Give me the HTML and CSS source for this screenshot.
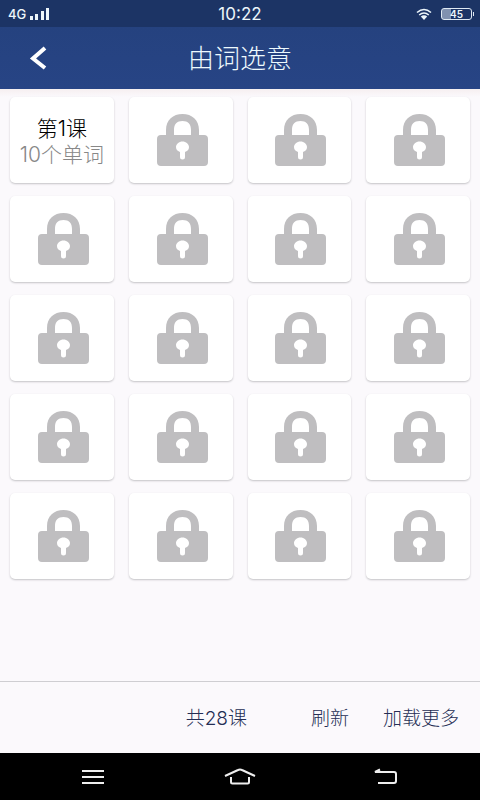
FILE: index.html
```html
<!DOCTYPE html>
<html lang="zh-CN">
<head>
<meta charset="utf-8">
<meta name="viewport" content="width=device-width, initial-scale=1">
<title>由词选意</title>
<link rel="stylesheet" href="styles.css">
</head>
<body>
<svg class="defs" width="0" height="0" aria-hidden="true">
  <symbol id="lock" viewBox="0 0 51 54">
    <path fill-rule="evenodd" d="M9 22V17C9 7 16 1 25.500 1S42 7 42 17V22H47Q51 22 51 26V49Q51 53 47 53H4Q0 53 0 49V26Q0 22 4 22ZM17 22H34V17C34 11 31 8 25.500 8S17 11 17 17ZM23 39V44Q23 46.500 25.500 46.500T28 44V39C31 38 32 36 32 34C32 31 29 28.500 25.500 28.500S19 31 19 34C19 36 20 38 23 39Z"/>
  </symbol>
</svg>
<div class="status">
  <div class="status-side">
    <span class="network">4G</span>
    <svg width="20" height="14" viewBox="0 0 20 14" fill="#edf6fb" aria-hidden="true"><path d="M0 9h3v4H0zM5 7h3v6H5zM11 4h3v9h-3zM16 1h3v12h-3z"/></svg>
  </div>
  <time class="clock">10:22</time>
  <div class="status-side status-end">
    <svg width="16" height="12" viewBox="0 0 16 12" fill="none" stroke="#edf6fb" stroke-width="1.600" aria-hidden="true"><path d="M1 4.500Q8-1.500 15 4.500M3.200 7Q8 3 12.800 7"/><path d="M4.800 8.600Q8 6 11.200 8.600L8 12Z" fill="#edf6fb" stroke="none"/></svg>
    <span class="battery">45</span>
  </div>
</div>
<header class="header">
  <button class="back" aria-label="返回"><svg width="18" height="24" viewBox="0 0 18 24" fill="none" stroke="#fff" stroke-width="4" aria-hidden="true"><path d="M16 2L4 12.500L16 22"/></svg></button>
  <h1 class="title">由词选意</h1>
</header>
<main class="lessons" id="lessons">
  <button class="card open"><span class="lesson">第1课</span><span class="words">10个单词</span></button>
</main>
<footer class="footer">
  <span class="total">共28课</span>
  <button class="action refresh">刷新</button>
  <button class="action">加载更多</button>
</footer>
<nav class="nav">
  <button class="key" aria-label="菜单"><svg width="34" height="22" viewBox="0 0 34 22" aria-hidden="true"><path d="M6 5H28M6 11H28M6 17H28"/></svg></button>
  <button class="key" aria-label="主页"><svg width="34" height="22" viewBox="0 0 34 22" aria-hidden="true"><path d="M2 10L15 4Q17 3 19 4L32 10M8 11V16Q8 17.500 9.500 17.500H24.500Q26 17.500 26 16V11"/></svg></button>
  <button class="key" aria-label="后退"><svg width="34" height="22" viewBox="0 0 34 22" aria-hidden="true"><path d="M10 3.500L5 6H24Q26 6 26 8V15Q26 17 24 17H8"/></svg></button>
</nav>
<script src="script.js"></script>
</body>
</html>
```
FILE: styles.css
```css
* { box-sizing: border-box; }
body {
  margin: 0;
  min-height: 100vh;
  display: flex;
  flex-direction: column;
  background: #fbf9fc;
  font-family: Inter, "Noto Sans CJK SC", sans-serif;
}
button {
  margin: 0;
  padding: 0;
  border: 0;
  background: none;
  font: inherit;
  color: inherit;
}
.defs { position: absolute; }
.status {
  height: 27px;
  padding: 0 8px;
  display: flex;
  align-items: center;
  background: #1c3465;
  color: #edf6fb;
}
.status-side {
  flex: 1;
  display: flex;
  align-items: center;
  gap: 4px;
}
.status-end { justify-content: flex-end; gap: 9px; }
.network { font-size: 13px; line-height: 16px; font-weight: 500; }
.clock { font-size: 17px; line-height: 20px; }
.battery {
  position: relative;
  width: 31px;
  height: 12px;
  border: 1px solid #dfe9f3;
  border-radius: 3px;
  background: linear-gradient(90deg, #8091b0 9px, transparent 9px);
  font-size: 10px;
  line-height: 10px;
  font-weight: 600;
  text-align: center;
}
.battery::after {
  content: "";
  position: absolute;
  right: -3px;
  top: 3px;
  width: 1px;
  height: 4px;
  background: #dfe9f3;
}
.header {
  height: 62px;
  padding: 0 26px;
  display: grid;
  grid-template-columns: 24px 1fr 24px;
  align-items: center;
  background: linear-gradient(#25427f, #274485);
  color: #edf9fd;
}
.back { height: 40px; display: flex; align-items: center; justify-content: center; }
.title {
  margin: 0;
  padding-top: 2px;
  font-size: 26px;
  line-height: 32px;
  font-weight: 300;
  text-align: center;
}
.lessons {
  flex: 1;
  padding: 8px 10px;
  display: grid;
  grid-template-columns: repeat(4, 1fr);
  grid-auto-rows: 86px;
  align-content: start;
  gap: 13px 15px;
  background: linear-gradient(#f6eff0, #fbf9fc 8px);
}
.card {
  display: flex;
  flex-direction: column;
  align-items: center;
  justify-content: center;
  border-radius: 5px;
  background: #fff;
  box-shadow: 0 1px 2px #c4c3c7;
}
.open { padding-top: 3px; }
.locked { padding-left: 3px; }
.card svg { width: 51px; height: 54px; fill: #bfbec0; }
.lesson, .words { font-size: 21px; line-height: 26px; font-weight: 300; }
.lesson { color: #000; }
.words { color: #888; }
.footer {
  height: 72px;
  padding: 2px 21px 0;
  display: flex;
  align-items: center;
  justify-content: flex-end;
  gap: 34px;
  border-top: 1px solid #cfced2;
  color: #252e54;
  font-size: 19px;
  line-height: 24px;
  font-weight: 300;
}
.total { margin-right: 30px; }
.nav {
  height: 47px;
  padding: 0 20px;
  display: grid;
  grid-template-columns: repeat(3, 1fr);
  background: #000;
}
.key { display: flex; align-items: center; justify-content: center; }
.key svg { fill: none; stroke: #eee; stroke-width: 2; }
```
FILE: script.js
```js
const lessons = document.getElementById('lessons');
for (let n = 2; n <= 20; n++) {
  const card = document.createElement('button');
  card.className = 'card locked';
  card.setAttribute('aria-label', `第${n}课`);
  card.innerHTML = '<svg aria-hidden="true"><use href="#lock"/></svg>';
  lessons.append(card);
}
```
